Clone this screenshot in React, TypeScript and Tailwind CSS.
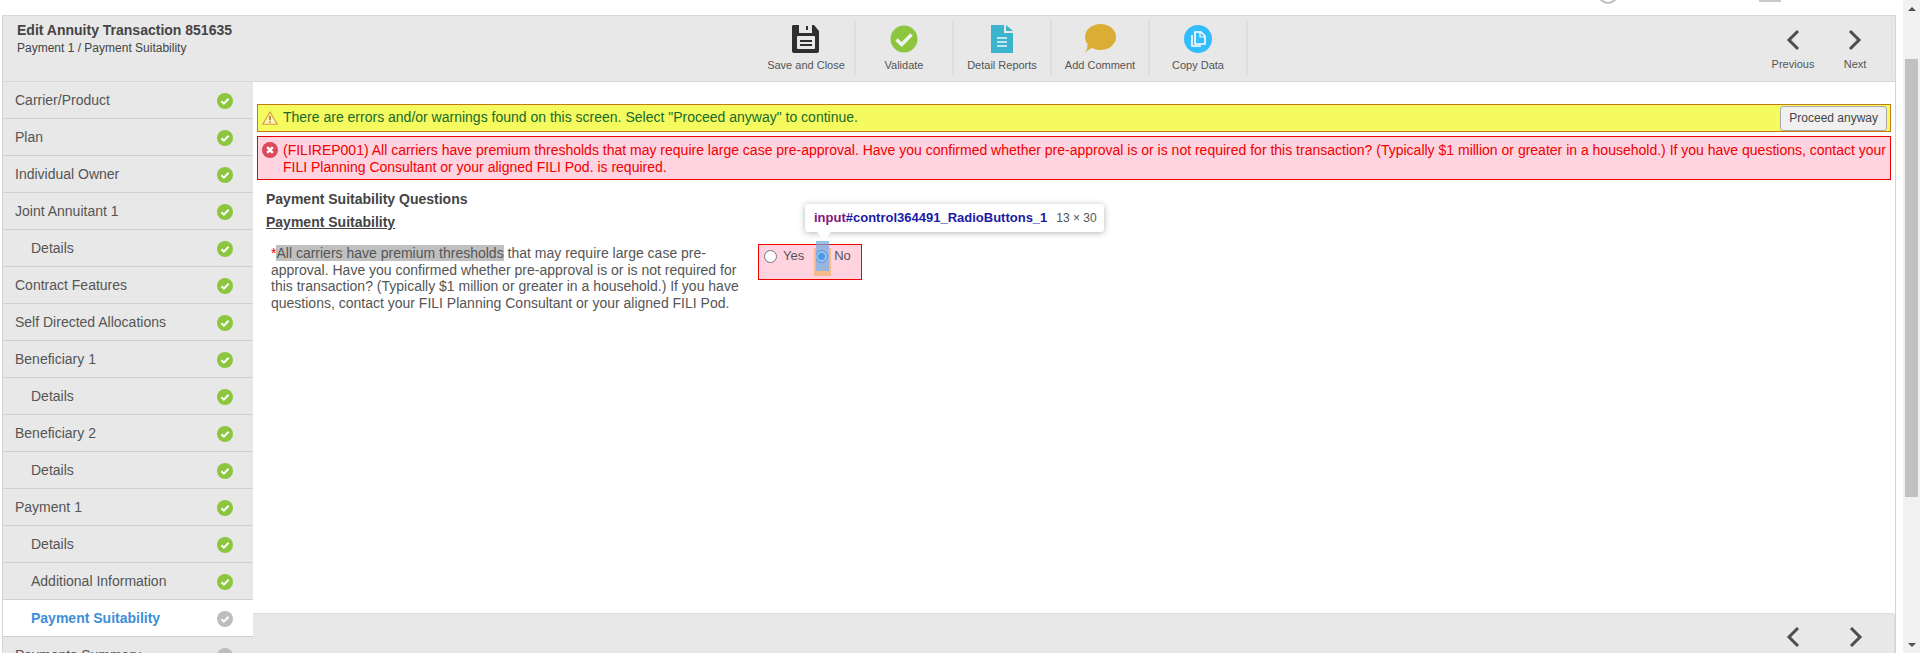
import React from 'react';

const NAV_ITEMS = [
  { label: 'Carrier/Product' },
  { label: 'Plan' },
  { label: 'Individual Owner' },
  { label: 'Joint Annuitant 1' },
  { label: 'Details', sub: true },
  { label: 'Contract Features' },
  { label: 'Self Directed Allocations' },
  { label: 'Beneficiary 1' },
  { label: 'Details', sub: true },
  { label: 'Beneficiary 2' },
  { label: 'Details', sub: true },
  { label: 'Payment 1' },
  { label: 'Details', sub: true },
  { label: 'Additional Information', sub: true },
  { label: 'Payment Suitability', sub: true, active: true },
  { label: 'Payments Summary', pending: true },
];

const StatusIcon: React.FC<{ color: string }> = ({ color }) => (
  <svg width="16" height="16" viewBox="0 0 16 16" className="shrink-0">
    <circle cx="8" cy="8" r="8" fill={color} />
    <path d="M4.4 8.3l2.5 2.4 4.7-4.9" fill="none" stroke="#fff" strokeWidth="2" />
  </svg>
);

const Chevron: React.FC<{ dir: 'left' | 'right' }> = ({ dir }) => (
  <svg width="14" height="22" viewBox="0 0 14 22">
    <path
      d={dir === 'left' ? 'M12 2L3 11l9 9' : 'M2 2l9 9-9 9'}
      fill="none"
      stroke="#4d4d4d"
      strokeWidth="3"
    />
  </svg>
);

const ToolbarItem: React.FC<{ label: string; icon: React.ReactNode }> = ({ label, icon }) => (
  <div className="flex h-[55px] w-[98px] flex-col items-center border-r-2 border-[#dedede] pt-[4px]">
    <div className="flex h-[29px] items-center justify-center">{icon}</div>
    <span className="mt-[5px] text-[11px] leading-[14px] text-[#555]">{label}</span>
  </div>
);

export default function App() {
  return (
    <div className="flex h-[653px] w-[1920px] overflow-hidden bg-white font-['Liberation_Sans',Arial,sans-serif]">
      <div className="flex w-[1903px] flex-col">
        {/* Clipped content of the page above */}
        <div className="relative h-[15px] shrink-0 overflow-hidden">
          <svg width="22" height="6" viewBox="0 0 22 6" className="absolute left-[1597px] top-0">
            <circle cx="11" cy="-6" r="9" fill="none" stroke="#bdbdbd" strokeWidth="2" />
          </svg>
          <div className="absolute left-[1759px] top-0 h-[2px] w-[22px] bg-[#c8c8c8]" />
        </div>

        <div className="ml-[2px] mr-[7px] flex min-h-0 flex-1 flex-col border-x border-[#d4d4d4]">
          {/* Header */}
          <header className="flex h-[67px] shrink-0 border-y border-[#d8d8d8] bg-[#e8e8e8]">
            <div className="w-[755px] pl-[14px] pt-[5px]">
              <h1 className="text-[14px] font-bold leading-[18px] text-[#444]">Edit Annuity Transaction 851635</h1>
              <p className="mt-[1px] text-[12px] leading-[16px] text-[#444]">Payment 1 / Payment Suitability</p>
            </div>
            <div className="flex pt-[4px]">
              <ToolbarItem
                label="Save and Close"
                icon={
                  <svg width="28" height="28" viewBox="0 0 28 28">
                    <path d="M1 0h21l5 6v20a2 2 0 0 1-2 2H2a2 2 0 0 1-2-2V1z" fill="#2f2f2f" />
                    <rect x="7" y="0" width="13" height="8" fill="#e8e8e8" />
                    <rect x="14" y="1" width="2" height="4" fill="#2f2f2f" />
                    <rect x="5" y="11" width="18" height="13" rx="1" fill="#e8e8e8" />
                    <rect x="8" y="15" width="12" height="2" fill="#2f2f2f" />
                    <rect x="8" y="19" width="12" height="2" fill="#2f2f2f" />
                  </svg>
                }
              />
              <ToolbarItem
                label="Validate"
                icon={
                  <svg width="28" height="28" viewBox="0 0 28 28">
                    <circle cx="14" cy="14" r="13.5" fill="#8cc63f" />
                    <path d="M6.5 14.5l5.2 5L21.5 9.5" fill="none" stroke="#f2f2f2" strokeWidth="3.4" />
                  </svg>
                }
              />
              <ToolbarItem
                label="Detail Reports"
                icon={
                  <svg width="22" height="28" viewBox="0 0 22 28">
                    <path d="M0 0h13v8h9v20H0z" fill="#3cb4cd" />
                    <path d="M15 0l7 6h-7z" fill="#3cb4cd" />
                    <path d="M6 13h10M6 17h10M6 21h10" stroke="#e8f6f9" strokeWidth="1.6" />
                  </svg>
                }
              />
              <ToolbarItem
                label="Add Comment"
                icon={
                  <svg width="32" height="29" viewBox="0 0 32 29">
                    <ellipse cx="16.5" cy="13" rx="15.5" ry="13" fill="#dcad35" />
                    <path d="M6 20l3 3 -9 6c3-3 4-5 3-8z" fill="#dcad35" />
                  </svg>
                }
              />
              <ToolbarItem
                label="Copy Data"
                icon={
                  <svg width="28" height="28" viewBox="0 0 28 28">
                    <circle cx="14" cy="14" r="14" fill="#33bdfb" />
                    <path d="M11 7h6l4 4v8h-10z" fill="none" stroke="#fff" strokeWidth="1.6" />
                    <path d="M8 10v11h9" fill="none" stroke="#fff" strokeWidth="1.6" />
                    <path d="M16 7v5h5" fill="none" stroke="#fff" strokeWidth="1.2" />
                  </svg>
                }
              />
            </div>
            <div className="my-[3px] ml-auto mr-[3px] flex rounded-r-[3px] border-r border-[#dedede] pr-[5px] pt-[10px]">
              <div className="flex w-[62px] flex-col items-center">
                <Chevron dir="left" />
                <span className="mt-[6px] text-[11px] leading-[14px] text-[#555]">Previous</span>
              </div>
              <div className="flex w-[62px] flex-col items-center">
                <Chevron dir="right" />
                <span className="mt-[6px] text-[11px] leading-[14px] text-[#555]">Next</span>
              </div>
            </div>
          </header>

          <div className="flex min-h-0 flex-1">
            {/* Sidebar */}
            <nav className="w-[250px] shrink-0 overflow-hidden">
              {NAV_ITEMS.map((item, i) => (
                <div
                  key={i}
                  className={`flex h-[37px] items-center justify-between border-b border-[#d0d0d0] pr-[20px] pt-[1px] ${
                    item.active ? '-ml-[2px] border-l-2 border-l-[#c4c8d4] bg-white' : 'bg-[#e8e8e8]'
                  } ${item.sub ? 'pl-[28px]' : 'pl-[12px]'}`}
                >
                  <span className={`text-[14px] ${item.active ? 'font-bold text-[#3b8fd9]' : 'text-[#555]'}`}>
                    {item.label}
                  </span>
                  <StatusIcon color={item.active || item.pending ? '#bdbdbd' : '#8cc63f'} />
                </div>
              ))}
            </nav>

            {/* Main */}
            <div className="flex min-w-0 flex-1 flex-col">
              <main className="min-h-0 flex-1 px-[4px] pt-[22px]">
                <div className="flex h-[28px] items-center justify-between border border-[#c87a10] bg-[#f5fb5e] pl-[4px] pr-[3px]">
                  <div className="flex items-center gap-[5px] pb-[1px]">
                    <svg width="16" height="14" viewBox="0 0 16 14">
                      <path d="M8 1L15.2 13.3H.8z" fill="#fff3c0" stroke="#d99a30" strokeWidth="1.1" />
                      <path d="M8 4.8v4.4M8 10.4v1.6" stroke="#b8801e" strokeWidth="1.7" />
                    </svg>
                    <span className="text-[14px] text-[#186a2c]">
                      There are errors and/or warnings found on this screen. Select "Proceed anyway" to continue.
                    </span>
                  </div>
                  <button className="h-[25px] rounded-[3px] border border-[#a9a9a9] bg-[#f0f0f0] px-[8px] text-[12px] text-[#444]">
                    Proceed anyway
                  </button>
                </div>

                <div className="mt-[4px] flex h-[44px] gap-[5px] border border-[#f00000] bg-[#ffd3df] pl-[4px] pt-[5px] text-[14px] leading-[16.67px] text-[#f00000]">
                  <svg width="16" height="16" viewBox="0 0 16 16" className="shrink-0">
                    <circle cx="8" cy="8" r="8" fill="#dc4a5a" />
                    <path d="M5.2 5.2l5.6 5.6M10.8 5.2l-5.6 5.6" stroke="#fff" strokeWidth="2.4" />
                  </svg>
                  <p className="whitespace-nowrap">
                    (FILIREP001) All carriers have premium thresholds that may require large case pre-approval. Have you
                    confirmed whether pre-approval is or is not required for this transaction? (Typically $1 million or
                    greater in a household.) If you have questions, contact your
                    <br />
                    FILI Planning Consultant or your aligned FILI Pod. is required.
                  </p>
                </div>

                <div className="pl-[9px] pt-[10px] text-[#444]">
                  <h2 className="text-[14px] font-bold leading-[18px]">Payment Suitability Questions</h2>
                  <h3 className="mt-[5px] text-[14px] font-bold leading-[18px] underline">Payment Suitability</h3>
                  <div className="mt-[14px] flex pl-[5px]">
                    <p className="w-[480px] text-[14px] leading-[16.67px] text-[#555]">
                      <span className="text-[#f00000]">*</span>
                      <span className="bg-[#c0c0c0]">All carriers have premium thresholds</span> that may require large case
                      pre-approval. Have you confirmed whether pre-approval is or is not required for this transaction?
                      (Typically $1 million or greater in a household.) If you have questions, contact your FILI Planning
                      Consultant or your aligned FILI Pod.
                    </p>
                    <div className="relative ml-[7px] -mt-[1px] flex h-[36px] w-[104px] items-start gap-[11px] border border-[#f00000] bg-[#ffd3df] pl-[5px] pt-[1px] text-[13px] text-[#555]">
                      <label className="relative flex items-center gap-[6px] leading-[20px]">
                        <span className="h-[13px] w-[13px] rounded-full border border-[#767676] bg-white" />
                        Yes
                      </label>
                      <label className="relative flex items-center gap-[6px] leading-[20px]">
                        <span className="flex h-[13px] w-[13px] items-center justify-center rounded-full border border-[#0075ff] bg-white">
                          <span className="h-[7px] w-[7px] rounded-full bg-[#0075ff]" />
                        </span>
                        No
                      </label>
                      {/* Devtools inspect highlight: orange margin round the blue content box */}
                      <div className="absolute left-[55px] top-[3px] h-[28px] w-[17px] border-x-2 border-b-[5px] border-[#f9b98a]" />
                      <div className="absolute left-[57px] top-[-4px] h-[30px] w-[13px] bg-[#6fa8dc]/70" />
                      <div className="absolute left-[46px] top-[-41px] z-10 flex h-[28px] w-[299px] items-center whitespace-nowrap rounded-[3px] bg-white pl-[9px] text-[13px] font-bold shadow-[0_1px_6px_rgba(0,0,0,0.3)]">
                        <span className="text-[#881280]">input</span>
                        <span className="text-[#1a1aa6]">#control364491_RadioButtons_1</span>
                        <span className="ml-[9px] text-[12px] font-normal text-[#555]">13 × 30</span>
                      </div>
                      <div className="absolute left-[58px] top-[-13px] z-10 h-0 w-0 border-x-[7px] border-t-[8px] border-x-transparent border-t-white" />
                    </div>
                  </div>
                </div>
              </main>

              {/* Bottom bar */}
              <div className="flex h-[40px] shrink-0 justify-end gap-[49px] rounded-tr-[3px] border-t border-r border-[#dcdcdc] bg-[#e8e8e8] pr-[31px] pt-[12px]">
                <Chevron dir="left" />
                <Chevron dir="right" />
              </div>
            </div>
          </div>
        </div>
      </div>

      {/* Browser scrollbar */}
      <div className="flex w-[17px] shrink-0 flex-col bg-[#f1f1f1]">
        <div className="flex h-[17px] items-center justify-center">
          <span className="h-0 w-0 border-x-[4px] border-b-[4px] border-x-transparent border-b-[#505050]" />
        </div>
        <div className="ml-[2px] mt-[42px] h-[438px] w-[13px] bg-[#c1c1c1]" />
        <div className="mt-auto flex h-[17px] items-center justify-center">
          <span className="h-0 w-0 border-x-[4px] border-t-[4px] border-x-transparent border-t-[#505050]" />
        </div>
      </div>
    </div>
  );
}
